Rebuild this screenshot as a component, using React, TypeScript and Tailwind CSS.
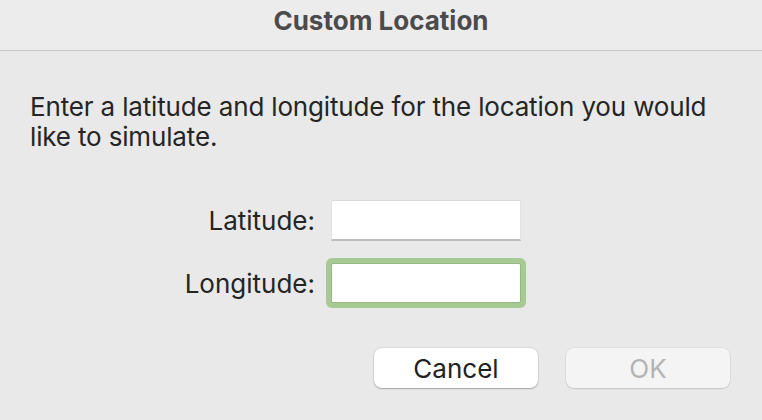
export default function App() {
  return (
    <div
      className="w-[762px] h-[420px] bg-[#e9e9e9] text-[#252525] overflow-hidden flex flex-col"
      style={{ fontFamily: 'Inter, "Noto Sans", sans-serif' }}
    >
      {/* Title bar */}
      <div className="h-[51px] shrink-0 bg-[#ececec] border-b border-[#c9c9c9] flex justify-center pt-[5px]">
        <span className="text-[26px] leading-[32px] font-bold text-[#4b4b4b]">
          Custom Location
        </span>
      </div>

      <div className="flex flex-col pt-[41px]">
        <p className="px-[30px] text-[26px] leading-[30px] tracking-[-0.006em]">
          Enter a latitude and longitude for the location you would like to simulate.
        </p>

        {/* Fields */}
        <div className="mt-[48px] px-[30px] grid grid-cols-[285px_190px] gap-x-4 gap-y-[22px] items-center">
          <label className="text-right text-[26px]">Latitude:</label>
          <div className="h-[41px] bg-white border-t border-[#dadada] border-x border-x-[#e2e2e2] border-b-2 border-b-[#bdbdbd]" />
          <label className="text-right text-[26px]">Longitude:</label>
          <div className="h-[40px] bg-white border border-[#94b983] rounded-[2px] shadow-[0_0_0_5px_#a7ca95]" />
        </div>

        {/* Buttons */}
        <div className="mt-[45px] pr-[32px] flex justify-end gap-[28px]">
          <button className="w-[164px] h-[40px] rounded-[8px] bg-white text-[26px] text-[#222] shadow-[0_0_0_0.5px_rgba(0,0,0,0.12),0_1px_1.5px_rgba(0,0,0,0.25)]">
            Cancel
          </button>
          <button
            disabled
            className="w-[164px] h-[40px] rounded-[8px] bg-[#f4f4f4] text-[26px] text-[#b4b4b4] shadow-[0_0_0_0.5px_rgba(0,0,0,0.08),0_1px_1.5px_rgba(0,0,0,0.12)]"
          >
            OK
          </button>
        </div>
      </div>
    </div>
  );
}
